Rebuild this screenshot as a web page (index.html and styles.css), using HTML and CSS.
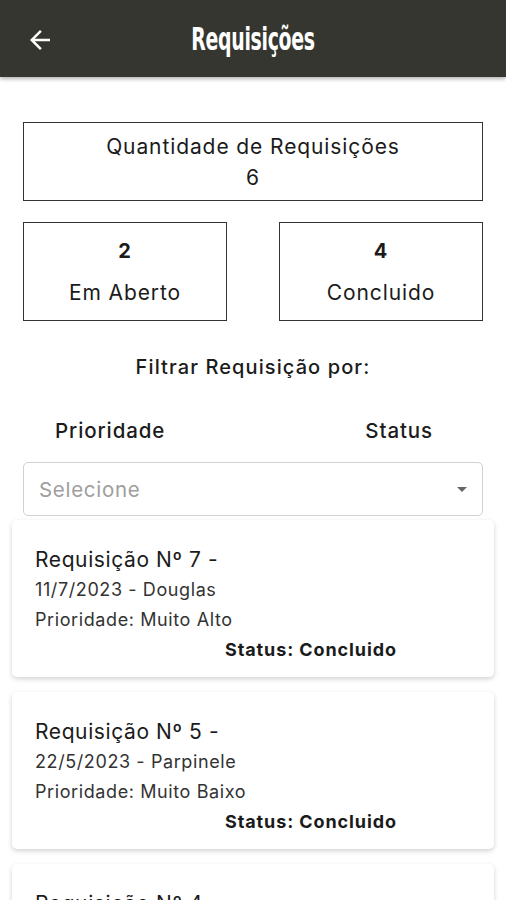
FILE: index.html
```html
<!DOCTYPE html>
<html lang="pt">
<head>
  <meta charset="UTF-8">
  <meta name="viewport" content="width=device-width, initial-scale=1.0">
  <title>Requisições</title>
  <link rel="stylesheet" href="styles.css">
</head>
<body>
  <header class="topbar">
    <svg class="back" width="30" height="30" viewBox="0 0 24 24">
      <path d="M20 11H7.83l5.59-5.59L12 4l-8 8 8 8 1.41-1.41L7.83 13H20v-2z" fill="#fff"/>
    </svg>
    <h1>Requisições</h1>
  </header>

  <main class="content">
    <div class="box total">
      <div>Quantidade de Requisições</div>
      <div>6</div>
    </div>

    <div class="counts">
      <div class="box count">
        <b>2</b>
        <span>Em Aberto</span>
      </div>
      <div class="box count">
        <b>4</b>
        <span>Concluido</span>
      </div>
    </div>

    <p class="filter-title">Filtrar Requisição por:</p>

    <div class="filter-tabs">
      <span>Prioridade</span>
      <span>Status</span>
    </div>

    <div class="select">
      <span>Selecione</span>
      <svg width="10" height="5" viewBox="0 0 10 5"><path d="M0 0h10L5 5z" fill="#666"/></svg>
    </div>

    <div class="card">
      <div class="card-title">Requisição Nº 7 -</div>
      <div class="card-line">11/7/2023 - Douglas</div>
      <div class="card-line">Prioridade: Muito Alto</div>
      <div class="card-status">Status: Concluido</div>
    </div>

    <div class="card">
      <div class="card-title">Requisição Nº 5 -</div>
      <div class="card-line">22/5/2023 - Parpinele</div>
      <div class="card-line">Prioridade: Muito Baixo</div>
      <div class="card-status">Status: Concluido</div>
    </div>

    <div class="card">
      <div class="card-title">Requisição Nº 4 -</div>
      <div class="card-line">10/5/2023 - Douglas</div>
      <div class="card-line">Prioridade: Alto</div>
      <div class="card-status">Status: Concluido</div>
    </div>
  </main>
</body>
</html>
```

FILE: styles.css
```css
body {
  margin: 0;
  font-family: Inter, Roboto, sans-serif;
  background: #fff;
  color: #1b1b1b;
  overflow: hidden;
}
.topbar {
  height: 77px;
  background: #363631;
  display: flex;
  align-items: center;
  justify-content: center;
  position: relative;
  box-shadow: 0 2px 4px rgba(0,0,0,0.3);
}
.back {
  position: absolute;
  left: 25px;
  top: 25px;
}
.topbar h1 {
  margin: 0;
  color: #fff;
  font-family: "DejaVu Sans Condensed", "DejaVu Sans", sans-serif;
  font-stretch: condensed;
  font-weight: bold;
  font-size: 21px;
  letter-spacing: -0.3px;
  transform: scaleY(1.5);
}
.content {
  padding: 45px 12px 0;
}
.box {
  border: 1.5px solid #333;
  text-align: center;
  font-size: 21px;
  letter-spacing: 0.9px;
}
.total {
  margin: 0 11px;
  height: 77px;
  display: flex;
  flex-direction: column;
  justify-content: center;
  gap: 6px;
}
.counts {
  display: flex;
  justify-content: space-between;
  margin: 21px 11px 0;
}
.count {
  width: 202px;
  height: 97px;
  display: flex;
  flex-direction: column;
  align-items: center;
  justify-content: center;
  gap: 17px;
}
.count b {
  font-size: 20px;
}
.filter-title {
  margin: 34px 0 0;
  text-align: center;
  font-size: 20px;
  font-weight: 500;
  letter-spacing: 1.1px;
}
.filter-tabs {
  display: flex;
  justify-content: space-between;
  padding: 0 61px 0 43px;
  margin-top: 39px;
  font-size: 20.5px;
  font-weight: 500;
  letter-spacing: 0.9px;
}
.select {
  margin: 19px 11px 0;
  height: 52px;
  border: 1.5px solid #d2d2d2;
  border-radius: 5px;
  display: flex;
  align-items: center;
  justify-content: space-between;
  padding: 0 15px;
  font-size: 20.5px;
  letter-spacing: 0.7px;
  color: #9e9e9e;
}
.card {
  background: #fff;
  border-radius: 5px;
  box-shadow: 0 2px 5px rgba(0,0,0,0.18);
  padding: 27px 23px 13px;
  margin-top: 4px;
  margin-bottom: 11px;
  height: 117px;
}
.card + .card {
  margin-top: 15px;
}
.card-title {
  font-size: 21px;
  letter-spacing: 0.6px;
  margin-bottom: 7px;
}
.card-line {
  font-size: 18px;
  color: #333;
  letter-spacing: 0.6px;
  margin-bottom: 9px;
}
.card-status {
  font-size: 18px;
  font-weight: bold;
  padding-left: 190px;
  margin-top: 9px;
  letter-spacing: 0.9px;
}
```
